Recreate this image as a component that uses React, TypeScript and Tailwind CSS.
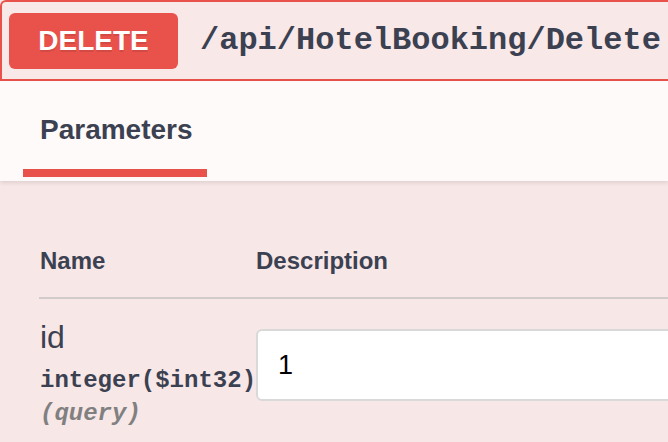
export default function App() {
  return (
    <main className="w-[668px] h-[442px] overflow-hidden bg-[#f8e7e7] text-[#3b4151] font-['Liberation_Sans',Arial,sans-serif]">
      {/* SUMMARY */}
      <div className="h-[81px] flex items-center border-t-2 border-l-2 border-b-2 border-[#e9514b] rounded-tl-[6px] bg-[#f8e8e8] pl-[7px]">
        <div className="w-[169px] h-[56px] shrink-0 rounded-[6px] bg-[#e9514b] flex items-center justify-center text-white text-[28px] font-bold [text-shadow:0_2px_0_rgba(0,0,0,0.1)]">
          DELETE
        </div>
        <span className="ml-[22px] whitespace-nowrap font-['Liberation_Mono',monospace] font-bold text-[32px] leading-[36px]">
          /api/HotelBooking/Delete
        </span>
      </div>

      {/* SECTION HEADER */}
      <div className="relative h-[100px] bg-[#fefafa] shadow-[0_2px_4px_rgba(0,0,0,0.1)] pl-[23px] pt-[33px]">
        <div className="w-[184px]">
          <h4 className="pl-[17px] text-[28px] leading-[32px] font-bold">Parameters</h4>
          <div className="mt-[23px] h-[8px] bg-[#e9514b]" />
        </div>
      </div>

      {/* TABLE */}
      <div className="pt-[66px]">
        <div className="flex pl-[40px] text-[24px] leading-[28px] font-bold">
          <div className="w-[216px]">Name</div>
          <div>Description</div>
        </div>
        <div className="ml-[39px] mt-[22px] h-[2px] bg-[#d2cbcc]" />

        <div className="flex pl-[40px] pt-[20px]">
          <div className="w-[216px] shrink-0">
            <div className="text-[32px] leading-[36px]">id</div>
            <div className="mt-[10px] whitespace-nowrap font-['Liberation_Mono',monospace] font-bold text-[24px] leading-[32px]">
              integer($int32)
            </div>
            <div className="mt-[1px] font-['Liberation_Mono',monospace] font-bold italic text-[24px] leading-[32px] text-[#808080]">
              (query)
            </div>
          </div>
          <div className="mt-[10px] w-[480px] h-[72px] shrink-0 flex items-center rounded-[6px] border-2 border-[#d9d9d9] bg-white pl-[20px] text-[27px] text-black">
            1
          </div>
        </div>
      </div>
    </main>
  );
}
